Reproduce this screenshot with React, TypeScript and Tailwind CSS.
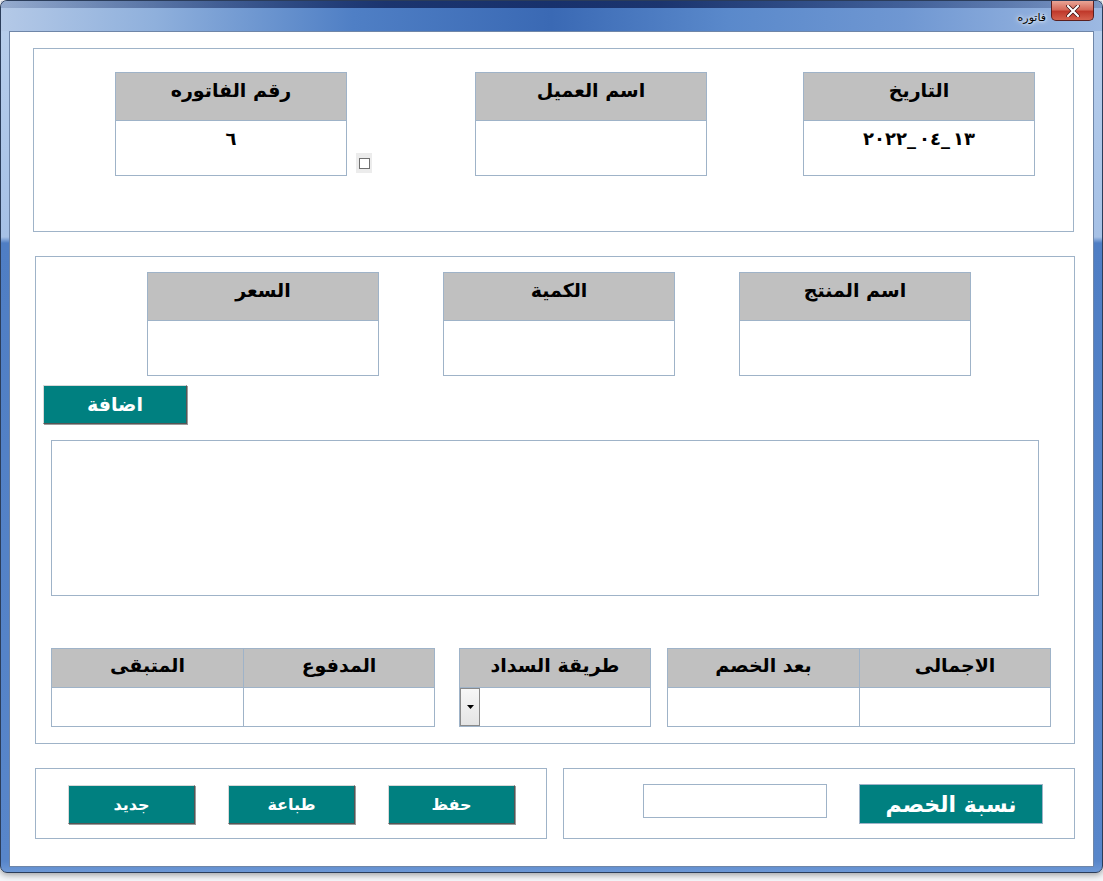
import React from "react"

const ar = "font-['DejaVu_Sans',sans-serif] font-bold"

function Field({ label, value, className = "" }: { label: string; value?: React.ReactNode; className?: string }) {
    return (
        <div className={`w-[232px] flex flex-col border border-[#9fb3c8] ${className}`}>
            <div className={`h-[48px] bg-[#c0c0c0] border-b border-[#9fb3c8] flex justify-center pt-[3px] text-[19px] text-black ${ar}`}>
                <span dir="rtl">{label}</span>
            </div>
            <div className={`h-[54px] bg-white flex justify-center pt-[4px] text-[18px] text-black ${ar}`}>
                {value}
            </div>
        </div>
    )
}

function Cell({ label, children, className = "" }: { label: string; children?: React.ReactNode; className?: string }) {
    return (
        <div className={`flex flex-col border border-[#9fb3c8] ${className}`}>
            <div className={`h-[39px] bg-[#c0c0c0] border-b border-[#9fb3c8] flex justify-center pt-[2px] text-[19px] text-black ${ar}`}>
                <span dir="rtl">{label}</span>
            </div>
            <div className="h-[38px] bg-white flex">{children}</div>
        </div>
    )
}

function TealButton({ label, className = "" }: { label: string; className?: string }) {
    return (
        <button
            className={`h-[39px] bg-[#008080] text-white flex items-center justify-center text-[16px] border border-t-[#d8d8d8] border-l-[#d8d8d8] border-r-[#555] border-b-[#555] shadow-[1px_1px_0_#9a9a9a] ${ar} ${className}`}
        >
            <span dir="rtl">{label}</span>
        </button>
    )
}

function DateValue() {
    const parts = ["٢٠٢٢", "_", "٠٤", "_", "١٣"]
    return (
        <div className="flex tracking-[3px]">
            {parts.map((p, i) => (
                <span key={i}>{p}</span>
            ))}
        </div>
    )
}

export default function App() {
    return (
        <div className="w-[1103px] h-[881px] bg-[#f4f6f9] overflow-hidden">
            <div className="w-[1103px] h-[873px] rounded-[7px] border border-[#2b3d5a] bg-[linear-gradient(180deg,#b9cfec_0px,#a6c1e6_236px,#4f7ec4_242px,#5886ca_860px,#6d98d6_100%)] flex flex-col shadow-[0_2px_6px_rgba(0,0,0,0.35)]">
                {/* title bar */}
                <div className="relative h-[30px] rounded-t-[6px] bg-[linear-gradient(90deg,#b4c9e7_0%,#8fb0dc_14%,#4f7fc5_32%,#3a69b4_50%,#5a89cb_66%,#6f97d2_82%,#9db9e2_100%)]">
                    <div className="absolute inset-x-0 top-0 h-[7px] bg-[linear-gradient(90deg,rgba(30,55,110,0.2),rgba(15,35,90,0.8)_35%,rgba(15,35,90,0.8)_60%,rgba(30,55,110,0.25))]" />
                    <div className="absolute right-[56px] top-[9px] text-[11px] text-black font-['DejaVu_Sans',sans-serif] [text-shadow:0_0_6px_#fff,0_0_3px_#fff]" dir="rtl">
                        فاتوره
                    </div>
                    <div className="absolute right-[8px] top-0 w-[43px] h-[20px] rounded-b-[5px] border border-t-0 border-[#5a1f1f] bg-[linear-gradient(180deg,#e9a596_0%,#d66a5a_45%,#c0392b_55%,#d5614e_100%)] flex items-center justify-center">
                        <svg width="14" height="12" viewBox="0 0 14 12">
                            <path d="M2 1 L12 11 M12 1 L2 11" stroke="#3b1010" strokeWidth="3.6" strokeLinecap="round" />
                            <path d="M2 1 L12 11 M12 1 L2 11" stroke="#fff" strokeWidth="2.2" strokeLinecap="round" />
                        </svg>
                    </div>
                </div>

                {/* client area */}
                <div className="mx-[8px] mb-[5px] flex-1 bg-white border border-[#6f86a8] flex flex-col pl-[23px] pt-[16px]">
                    {/* header section */}
                    <div className="w-[1041px] h-[184px] border border-[#9fb3c8] flex items-start pt-[23px] pl-[81px]">
                        <Field label="رقم الفاتوره" value={<span>٦</span>} />
                        <div className="ml-[9px] mt-[81px] w-[16px] h-[20px] bg-[#ececec] flex items-center justify-center">
                            <div className="w-[11px] h-[11px] border border-[#707070] bg-white" />
                        </div>
                        <Field label="اسم العميل" className="ml-[103px]" />
                        <Field label="التاريخ" className="ml-[96px]" value={<DateValue />} />
                    </div>

                    {/* product section */}
                    <div className="mt-[24px] ml-[2px] w-[1040px] h-[488px] border border-[#9fb3c8] flex flex-col pt-[15px]">
                        <div className="flex pl-[111px]">
                            <Field label="السعر" />
                            <Field label="الكمية" className="ml-[64px]" />
                            <Field label="اسم المنتج" className="ml-[64px]" />
                        </div>
                        <TealButton label="اضافة" className="mt-[9px] ml-[7px] w-[144px] text-[19px]" />
                        <div className="mt-[16px] ml-[15px] w-[988px] h-[156px] border border-[#9fb3c8] bg-white" />
                        <div className="mt-[52px] ml-[15px] flex">
                            <Cell label="المتبقى" className="w-[193px]" />
                            <Cell label="المدفوع" className="w-[192px] -ml-px" />
                            <Cell label="طريقة السداد" className="w-[192px] ml-[24px]">
                                <div className="w-[20px] h-full border border-[#8a8a8a] bg-[linear-gradient(180deg,#f7f7f7,#e4e4e4)] flex items-center justify-center">
                                    <svg width="7" height="4" viewBox="0 0 7 4">
                                        <path d="M0 0 L7 0 L3.5 4 Z" fill="#000" />
                                    </svg>
                                </div>
                            </Cell>
                            <Cell label="بعد الخصم" className="w-[193px] ml-[16px]" />
                            <Cell label="الاجمالى" className="w-[192px] -ml-px" />
                        </div>
                    </div>

                    {/* actions */}
                    <div className="mt-[24px] ml-[2px] flex gap-[16px]">
                        <div className="w-[512px] h-[71px] border border-[#9fb3c8] flex items-start pt-[16px] pl-[32px] gap-[33px]">
                            <TealButton label="جديد" className="w-[127px]" />
                            <TealButton label="طباعة" className="w-[127px]" />
                            <TealButton label="حفظ" className="w-[127px]" />
                        </div>
                        <div className="w-[512px] h-[71px] border border-[#9fb3c8] flex items-start pt-[15px] pl-[79px]">
                            <div className="w-[184px] h-[34px] border border-[#9fb3c8] bg-white" />
                            <div className={`ml-[32px] w-[184px] h-[40px] bg-[#008080] border border-[#9fb3c8] text-white flex items-center justify-center text-[22px] ${ar}`}>
                                <span dir="rtl">نسبة الخصم</span>
                            </div>
                        </div>
                    </div>
                </div>
            </div>
        </div>
    )
}
